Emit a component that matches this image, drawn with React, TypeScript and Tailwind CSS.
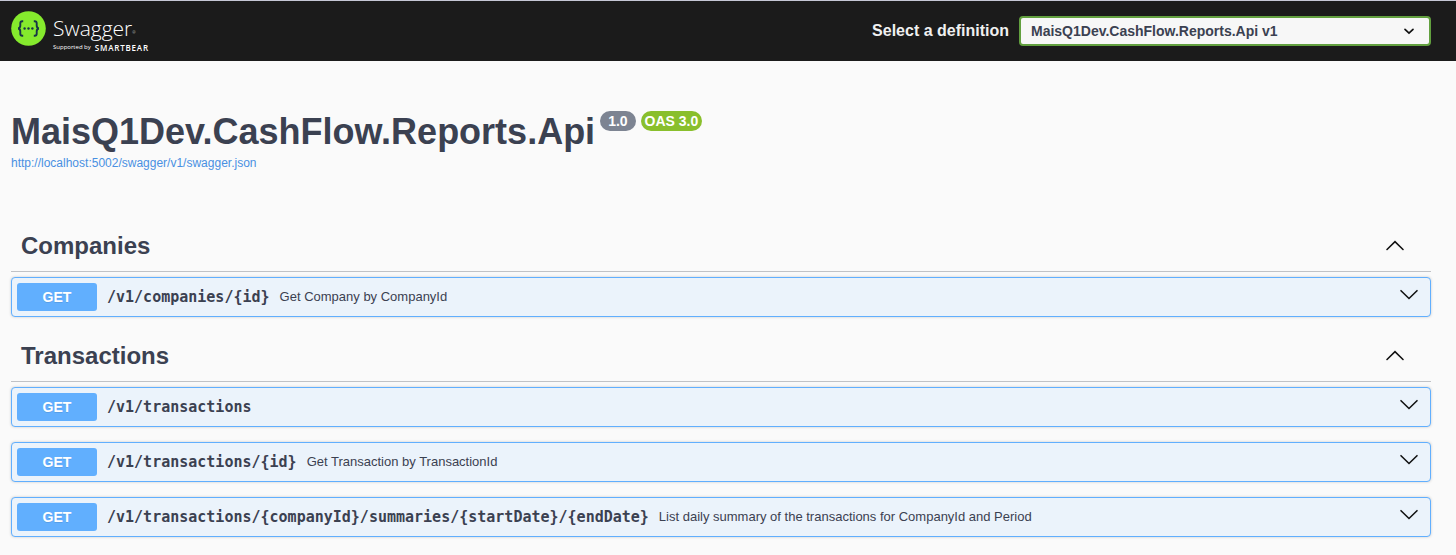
import React from "react";

type Operation = { path: string; summary?: string };
type Section = { name: string; operations: Operation[] };

const sections: Section[] = [
  {
    name: "Companies",
    operations: [{ path: "/v1/companies/{id}", summary: "Get Company by CompanyId" }],
  },
  {
    name: "Transactions",
    operations: [
      { path: "/v1/transactions" },
      { path: "/v1/transactions/{id}", summary: "Get Transaction by TransactionId" },
      {
        path: "/v1/transactions/{companyId}/summaries/{startDate}/{endDate}",
        summary: "List daily summary of the transactions for CompanyId and Period",
      },
    ],
  },
];

function Arrow({ up = false }: { up?: boolean }) {
  return (
    <svg width="20" height="20" viewBox="0 0 20 20" fill="none" stroke="#111" strokeWidth="1.6" strokeLinecap="round" aria-hidden="true">
      <path d={up ? "M2 13.5 10 5.7l8 7.8" : "M2 5.7l8 7.8 8-7.8"} />
    </svg>
  );
}

function Logo() {
  return (
    <a href="#" aria-label="Swagger" className="flex items-start gap-[7px] text-white">
      <svg width="35" height="35" viewBox="0 0 35 35" fill="none" aria-hidden="true">
        <circle cx="17.5" cy="17.5" r="17.3" fill="#85ea2d" />
        <g stroke="#173647" strokeWidth="1.9">
          <path d="M12.2 10.2h-.9c-1.4 0-2 .7-2 2v2.4c0 1.7-.6 2.6-2.1 2.9 1.5.3 2.1 1.2 2.1 2.9v2.4c0 1.3.6 2 2 2h.9" />
          <path d="M22.8 10.2h.9c1.4 0 2 .7 2 2v2.4c0 1.7.6 2.6 2.1 2.9-1.5.3-2.1 1.2-2.1 2.9v2.4c0 1.3-.6 2-2 2h-.9" />
        </g>
        <g fill="#173647">
          <circle cx="13.6" cy="17.5" r="1.2" />
          <circle cx="17.5" cy="17.5" r="1.2" />
          <circle cx="21.4" cy="17.5" r="1.2" />
        </g>
      </svg>
      <span className="flex flex-col pt-0.5 font-['Open_Sans',sans-serif]">
        <span className="flex items-end text-[21px] leading-[30px] font-light">
          Swagger<span className="text-[4px] leading-5">®</span>
        </span>
        <span className="flex items-center gap-1 whitespace-nowrap text-[6px] leading-[9px]">
          Supported by
          <b className="text-[8px] font-semibold tracking-widest">SMARTBEAR</b>
        </span>
      </span>
    </a>
  );
}

function OperationRow({ path, summary }: Operation) {
  return (
    <button
      type="button"
      className="flex w-full items-center rounded border border-[#61affe] bg-[#ebf3fb] py-[5px] pr-[11px] pl-[5px] text-left shadow-[0_0_3px_rgba(0,0,0,0.19)]"
    >
      <span className="w-20 shrink-0 rounded-[3px] bg-[#61affe] text-center text-sm leading-7 font-bold text-white [text-shadow:0_1px_0_rgba(0,0,0,0.1)]">
        GET
      </span>
      <span className="flex min-w-0 flex-1 items-center gap-2.5 px-2.5">
        <span className="font-['DejaVu_Sans_Mono',monospace] text-[15px] leading-5 font-bold">{path}</span>
        {summary && <span className="text-[13px] leading-5">{summary}</span>}
      </span>
      <span className="-mt-1">
        <Arrow />
      </span>
    </button>
  );
}

export default function App() {
  return (
    <div className="min-h-screen bg-[#fafafa] font-['Liberation_Sans',Arial,sans-serif] text-[#3b4151]">
      <header className="flex items-start justify-between border-t border-[#c5c7d5] bg-[#1b1b1b] pt-2.5 pr-[25px] pb-[9px] pl-[11px]">
        <Logo />
        <div className="flex items-center gap-2.5 pt-[5px]">
          <label htmlFor="definition" className="text-base leading-5 font-bold text-[#f0f0f0]">
            Select a definition
          </label>
          <div className="relative">
            <select
              id="definition"
              className="h-[30px] w-[412px] appearance-none rounded border-2 border-[#62a03f] bg-[#f7f7f7] px-2.5 text-sm font-bold"
            >
              <option>MaisQ1Dev.CashFlow.Reports.Api v1</option>
            </select>
            <svg
              className="pointer-events-none absolute top-[5px] right-3"
              width="20"
              height="20"
              viewBox="0 0 20 20"
              fill="none"
              stroke="#111"
              strokeWidth="1.7"
              strokeLinecap="round"
              aria-hidden="true"
            >
              <path d="M6 8.4l4 3.8 4-3.8" />
            </svg>
          </div>
        </div>
      </header>

      <main className="pt-[50px] pr-[25px] pb-4 pl-[11px]">
        <div className="mb-[50px]">
          <div className="flex items-start gap-[5px]">
            <h1 className="text-4xl leading-[42px] font-bold">MaisQ1Dev.CashFlow.Reports.Api</h1>
            <span className="rounded-full bg-[#7d8492] px-2 text-sm leading-5 font-bold text-white">1.0</span>
            <span className="rounded-full bg-[#89bf2c] px-1 text-sm leading-5 font-bold text-white">OAS 3.0</span>
          </div>
          <a href="#" className="block text-xs leading-5 text-[#4990e2]">
            http://localhost:5002/swagger/v1/swagger.json
          </a>
        </div>

        <div className="flex flex-col gap-4">
          {sections.map((section) => (
            <section key={section.name}>
              <h2 className="mb-[5px] border-b border-[#c0c2c6]">
                <button
                  type="button"
                  className="flex w-full items-center justify-between pt-[9px] pr-[26px] pb-[11px] pl-2.5 text-left text-2xl leading-7 font-bold"
                >
                  {section.name}
                  <Arrow up />
                </button>
              </h2>
              <div className="flex flex-col gap-[15px]">
                {section.operations.map((operation) => (
                  <OperationRow key={operation.path} {...operation} />
                ))}
              </div>
            </section>
          ))}
        </div>
      </main>
    </div>
  );
}
